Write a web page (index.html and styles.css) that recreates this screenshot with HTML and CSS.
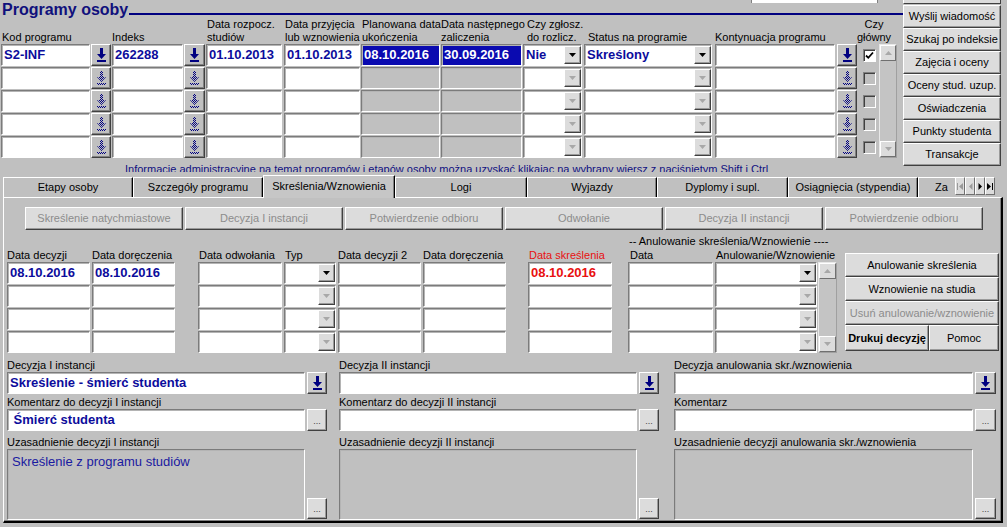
FILE: index.html
```html
<!DOCTYPE html>
<html>
<head>
<meta charset="utf-8">
<link rel="stylesheet" href="styles.css">
</head>
<body>
<svg class="defs" width="0" height="0"><defs><pattern id="dith" width="2" height="2" patternUnits="userSpaceOnUse"><rect width="1" height="1" fill="#000080"/><rect x="1" y="1" width="1" height="1" fill="#000080"/></pattern></defs></svg>
<div class="top">
  <div class="topl">
    <div class="hdr">
      <div class="title">Programy osoby</div>
      <div class="hline"><div class="topfield"></div><div class="bar"></div></div>
    </div>
    <div class="gwrap">
      <div class="gcols">
        <div class="lbls">
          <div class="c1 pl1">Kod programu</div>
          <div class="c2"></div>
          <div class="c3">Indeks</div>
          <div class="c4"></div>
          <div class="c5 pl1">Data rozpocz.<br>studiów</div>
          <div class="c6 pl1">Data przyjęcia<br>lub wznowienia</div>
          <div class="c7 pl1">Planowana data<br>ukończenia</div>
          <div class="c8">Data następnego<br>zaliczenia</div>
          <div class="c9 pl4">Czy zgłosz.<br>do rozlicz.</div>
          <div class="c10 pl4">Status na programie</div>
          <div class="c11">Kontynuacja programu</div>
          <div class="c12"></div>
          <div class="c13 cg">Czy<br>główny</div>
        </div>
        <div class="row">
          <div class="c1 f"><div class="v">S2-INF</div></div>
          <div class="c2 b"><svg width="9" height="14" viewBox="0 0 9 14"><path d="M3 0h3v6h3L4.5 11 0 6h3zM0 12h9v2H0z" fill="#000080"/></svg></div>
          <div class="c3 f"><div class="v">262288</div></div>
          <div class="c4 b"><svg width="9" height="14" viewBox="0 0 9 14"><path d="M3 0h3v6h3L4.5 11 0 6h3zM0 12h9v2H0z" fill="#000080"/></svg></div>
          <div class="c5 f"><div class="v">01.10.2013</div></div>
          <div class="c6 f"><div class="v">01.10.2013</div></div>
          <div class="c7 f sel"><div class="v">08.10.2016</div></div>
          <div class="c8 f sel"><div class="v">30.09.2016</div></div>
          <div class="c9 f dd"><div class="v">Nie</div><div class="ddb"><svg width="7" height="4"><path d="M0 0h7L3.5 4z" fill="#000"/></svg></div></div>
          <div class="c10 f dd"><div class="v">Skreślony</div><div class="ddb"><svg width="7" height="4"><path d="M0 0h7L3.5 4z" fill="#000"/></svg></div></div>
          <div class="c11 f"></div>
          <div class="c12 b"><svg width="9" height="14" viewBox="0 0 9 14"><path d="M3 0h3v6h3L4.5 11 0 6h3zM0 12h9v2H0z" fill="#000080"/></svg></div>
          <div class="c13"><div class="chk"><svg width="9" height="9" viewBox="0 0 9 9"><path d="M1 4.5l2.3 2.3L8 1.5" stroke="#000" stroke-width="1.8" fill="none"/></svg></div></div>
        </div>
        <div class="row">
          <div class="c1 f"></div>
          <div class="c2 b"><svg width="9" height="14" viewBox="0 0 9 14"><path d="M3 0h3v6h3L4.5 11 0 6h3zM0 12h9v2H0z" fill="url(#dith)"/></svg></div>
          <div class="c3 f"></div>
          <div class="c4 b"><svg width="9" height="14" viewBox="0 0 9 14"><path d="M3 0h3v6h3L4.5 11 0 6h3zM0 12h9v2H0z" fill="url(#dith)"/></svg></div>
          <div class="c5 f"></div>
          <div class="c6 f"></div>
          <div class="c7 f g"></div>
          <div class="c8 f g"></div>
          <div class="c9 f dd"><div class="v"></div><div class="ddb"><svg width="7" height="4"><path d="M0 0h7L3.5 4z" fill="#a8a8a8"/></svg></div></div>
          <div class="c10 f dd"><div class="v"></div><div class="ddb"><svg width="7" height="4"><path d="M0 0h7L3.5 4z" fill="#a8a8a8"/></svg></div></div>
          <div class="c11 f"></div>
          <div class="c12 b"><svg width="9" height="14" viewBox="0 0 9 14"><path d="M3 0h3v6h3L4.5 11 0 6h3zM0 12h9v2H0z" fill="url(#dith)"/></svg></div>
          <div class="c13"><div class="chk dis"></div></div>
        </div>
        <div class="row">
          <div class="c1 f"></div>
          <div class="c2 b"><svg width="9" height="14" viewBox="0 0 9 14"><path d="M3 0h3v6h3L4.5 11 0 6h3zM0 12h9v2H0z" fill="url(#dith)"/></svg></div>
          <div class="c3 f"></div>
          <div class="c4 b"><svg width="9" height="14" viewBox="0 0 9 14"><path d="M3 0h3v6h3L4.5 11 0 6h3zM0 12h9v2H0z" fill="url(#dith)"/></svg></div>
          <div class="c5 f"></div>
          <div class="c6 f"></div>
          <div class="c7 f g"></div>
          <div class="c8 f g"></div>
          <div class="c9 f dd"><div class="v"></div><div class="ddb"><svg width="7" height="4"><path d="M0 0h7L3.5 4z" fill="#a8a8a8"/></svg></div></div>
          <div class="c10 f dd"><div class="v"></div><div class="ddb"><svg width="7" height="4"><path d="M0 0h7L3.5 4z" fill="#a8a8a8"/></svg></div></div>
          <div class="c11 f"></div>
          <div class="c12 b"><svg width="9" height="14" viewBox="0 0 9 14"><path d="M3 0h3v6h3L4.5 11 0 6h3zM0 12h9v2H0z" fill="url(#dith)"/></svg></div>
          <div class="c13"><div class="chk dis"></div></div>
        </div>
        <div class="row">
          <div class="c1 f"></div>
          <div class="c2 b"><svg width="9" height="14" viewBox="0 0 9 14"><path d="M3 0h3v6h3L4.5 11 0 6h3zM0 12h9v2H0z" fill="url(#dith)"/></svg></div>
          <div class="c3 f"></div>
          <div class="c4 b"><svg width="9" height="14" viewBox="0 0 9 14"><path d="M3 0h3v6h3L4.5 11 0 6h3zM0 12h9v2H0z" fill="url(#dith)"/></svg></div>
          <div class="c5 f"></div>
          <div class="c6 f"></div>
          <div class="c7 f g"></div>
          <div class="c8 f g"></div>
          <div class="c9 f dd"><div class="v"></div><div class="ddb"><svg width="7" height="4"><path d="M0 0h7L3.5 4z" fill="#a8a8a8"/></svg></div></div>
          <div class="c10 f dd"><div class="v"></div><div class="ddb"><svg width="7" height="4"><path d="M0 0h7L3.5 4z" fill="#a8a8a8"/></svg></div></div>
          <div class="c11 f"></div>
          <div class="c12 b"><svg width="9" height="14" viewBox="0 0 9 14"><path d="M3 0h3v6h3L4.5 11 0 6h3zM0 12h9v2H0z" fill="url(#dith)"/></svg></div>
          <div class="c13"><div class="chk dis"></div></div>
        </div>
        <div class="row">
          <div class="c1 f"></div>
          <div class="c2 b"><svg width="9" height="14" viewBox="0 0 9 14"><path d="M3 0h3v6h3L4.5 11 0 6h3zM0 12h9v2H0z" fill="url(#dith)"/></svg></div>
          <div class="c3 f"></div>
          <div class="c4 b"><svg width="9" height="14" viewBox="0 0 9 14"><path d="M3 0h3v6h3L4.5 11 0 6h3zM0 12h9v2H0z" fill="url(#dith)"/></svg></div>
          <div class="c5 f"></div>
          <div class="c6 f"></div>
          <div class="c7 f g"></div>
          <div class="c8 f g"></div>
          <div class="c9 f dd"><div class="v"></div><div class="ddb"><svg width="7" height="4"><path d="M0 0h7L3.5 4z" fill="#a8a8a8"/></svg></div></div>
          <div class="c10 f dd"><div class="v"></div><div class="ddb"><svg width="7" height="4"><path d="M0 0h7L3.5 4z" fill="#a8a8a8"/></svg></div></div>
          <div class="c11 f"></div>
          <div class="c12 b"><svg width="9" height="14" viewBox="0 0 9 14"><path d="M3 0h3v6h3L4.5 11 0 6h3zM0 12h9v2H0z" fill="url(#dith)"/></svg></div>
          <div class="c13"><div class="chk dis"></div></div>
        </div>
      </div>
      <div class="vs top-vs">
        <div class="sa"><svg width="7" height="4"><path d="M0 4h7L3.5 0z" fill="#a8a8a8"/></svg></div>
        <div class="sa"><svg width="7" height="4"><path d="M0 0h7L3.5 4z" fill="#a8a8a8"/></svg></div>
      </div>
    </div>
    <div class="info">Informacje administracyjne na temat programów i etapów osoby można uzyskać klikając na wybrany wiersz z naciśniętym Shift i Ctrl</div>
  </div>
  <div class="rcol">
    <div class="rpart"></div>
    <div class="lb rb">Wyślij wiadomość</div>
    <div class="lb rb">Szukaj po indeksie</div>
    <div class="lb rb">Zajęcia i oceny</div>
    <div class="lb rb">Oceny stud. uzup.</div>
    <div class="lb rb">Oświadczenia</div>
    <div class="lb rb">Punkty studenta</div>
    <div class="lb rb">Transakcje</div>
  </div>
</div>

<div class="tabctl">
  <div class="tabs">
    <div class="tab w130">Etapy osoby</div>
    <div class="tab w130">Szczegóły programu</div>
    <div class="tab w132 act">Skreślenia/Wznowienia</div>
    <div class="tab w132">Logi</div>
    <div class="tab w130">Wyjazdy</div>
    <div class="tab w131">Dyplomy i supl.</div>
    <div class="tab w130">Osiągnięcia (stypendia)</div>
    <div class="tab wza">Za</div>
    <div class="tnav">
      <div class="tn"><svg width="6" height="7"><path d="M0 0h1v7H0zM6 0v7L2 3.5z" fill="#9a9a9a"/></svg></div>
      <div class="tn"><svg width="5" height="7"><path d="M4.5 0v7L1 3.5z" fill="#9a9a9a"/></svg></div>
      <div class="tn"><svg width="5" height="7"><path d="M0.5 0v7L4 3.5z" fill="#000"/></svg></div>
      <div class="tn"><svg width="6" height="7"><path d="M0 0v7l4-3.5zM5 0h1v7H5z" fill="#000"/></svg></div>
    </div>
  </div>
  <div class="panel">
    <div class="subbtns">
      <div class="lb sb">Skreślenie natychmiastowe</div>
      <div class="lb sb">Decyzja I instancji</div>
      <div class="lb sb">Potwierdzenie odbioru</div>
      <div class="lb sb">Odwołanie</div>
      <div class="lb sb">Decyzja II instancji</div>
      <div class="lb sb">Potwierdzenie odbioru</div>
    </div>

    <div class="sec2">
      <div class="s2l">
        <div class="s2hdr">-- Anulowanie skreślenia/Wznowienie ----</div>
        <div class="s2lb">
          <div class="d1">Data decyzji</div>
          <div class="d2">Data doręczenia</div>
          <div class="d3 pl1">Data odwołania</div>
          <div class="d4 pl1">Typ</div>
          <div class="d5">Data decyzji 2</div>
          <div class="d6">Data doręczenia</div>
          <div class="d7 pl1 red">Data skreślenia</div>
          <div class="d8 pl2">Data</div>
          <div class="d9 pl1">Anulowanie/Wznowienie</div>
        </div>
        <div class="s2row">
          <div class="d1 f"><div class="v">08.10.2016</div></div>
          <div class="d2 f"><div class="v">08.10.2016</div></div>
          <div class="d3 f"></div>
          <div class="d4 f dd"><div class="v"></div><div class="ddb"><svg width="7" height="4"><path d="M0 0h7L3.5 4z" fill="#000"/></svg></div></div>
          <div class="d5 f"></div>
          <div class="d6 f"></div>
          <div class="d7 f"><div class="v redv">08.10.2016</div></div>
          <div class="d8 f"></div>
          <div class="d9 f dd"><div class="v"></div><div class="ddb"><svg width="7" height="4"><path d="M0 0h7L3.5 4z" fill="#000"/></svg></div></div>
        </div>
        <div class="s2row">
          <div class="d1 f"></div>
          <div class="d2 f"></div>
          <div class="d3 f"></div>
          <div class="d4 f dd"><div class="v"></div><div class="ddb"><svg width="7" height="4"><path d="M0 0h7L3.5 4z" fill="#a8a8a8"/></svg></div></div>
          <div class="d5 f"></div>
          <div class="d6 f"></div>
          <div class="d7 f"></div>
          <div class="d8 f"></div>
          <div class="d9 f dd"><div class="v"></div><div class="ddb"><svg width="7" height="4"><path d="M0 0h7L3.5 4z" fill="#a8a8a8"/></svg></div></div>
        </div>
        <div class="s2row">
          <div class="d1 f"></div>
          <div class="d2 f"></div>
          <div class="d3 f"></div>
          <div class="d4 f dd"><div class="v"></div><div class="ddb"><svg width="7" height="4"><path d="M0 0h7L3.5 4z" fill="#a8a8a8"/></svg></div></div>
          <div class="d5 f"></div>
          <div class="d6 f"></div>
          <div class="d7 f"></div>
          <div class="d8 f"></div>
          <div class="d9 f dd"><div class="v"></div><div class="ddb"><svg width="7" height="4"><path d="M0 0h7L3.5 4z" fill="#a8a8a8"/></svg></div></div>
        </div>
        <div class="s2row">
          <div class="d1 f"></div>
          <div class="d2 f"></div>
          <div class="d3 f"></div>
          <div class="d4 f dd"><div class="v"></div><div class="ddb"><svg width="7" height="4"><path d="M0 0h7L3.5 4z" fill="#a8a8a8"/></svg></div></div>
          <div class="d5 f"></div>
          <div class="d6 f"></div>
          <div class="d7 f"></div>
          <div class="d8 f"></div>
          <div class="d9 f dd"><div class="v"></div><div class="ddb"><svg width="7" height="4"><path d="M0 0h7L3.5 4z" fill="#a8a8a8"/></svg></div></div>
        </div>
      </div>
      <div class="vs s2vs">
        <div class="sa"><svg width="7" height="4"><path d="M0 4h7L3.5 0z" fill="#a8a8a8"/></svg></div>
        <div class="sa"><svg width="7" height="4"><path d="M0 0h7L3.5 4z" fill="#a8a8a8"/></svg></div>
      </div>
      <div class="s2btns">
        <div class="lb ab">Anulowanie skreślenia</div>
        <div class="lb ab">Wznowienie na studia</div>
        <div class="lb ab dis">Usuń anulowanie/wznowienie</div>
        <div class="abrow">
          <div class="lb ab drukuj">Drukuj decyzję</div>
          <div class="lb ab pomoc">Pomoc</div>
        </div>
      </div>
    </div>

    <div class="sec3">
      <div class="col">
        <div class="l3">Decyzja I instancji</div>
        <div class="r3">
          <div class="f"><div class="v">Skreślenie - śmierć studenta</div></div>
          <div class="b lov3"><svg width="9" height="14" viewBox="0 0 9 14"><path d="M3 0h3v6h3L4.5 11 0 6h3zM0 12h9v2H0z" fill="#000080"/></svg></div>
        </div>
        <div class="l3 m1">Komentarz do decyzji I instancji</div>
        <div class="r3">
          <div class="f"><div class="v">&nbsp;Śmierć studenta</div></div>
          <div class="lb dots">...</div>
        </div>
        <div class="l3 m4">Uzasadnienie decyzji I instancji</div>
        <div class="r3 ta">
          <div class="f g"><div class="tav">Skreślenie z programu studiów</div></div>
          <div class="lb dots">...</div>
        </div>
      </div>
      <div class="col col2">
        <div class="l3">Decyzja II instancji</div>
        <div class="r3">
          <div class="f"></div>
          <div class="b lov3"><svg width="9" height="14" viewBox="0 0 9 14"><path d="M3 0h3v6h3L4.5 11 0 6h3zM0 12h9v2H0z" fill="#000080"/></svg></div>
        </div>
        <div class="l3 m1">Komentarz do decyzji II instancji</div>
        <div class="r3">
          <div class="f"></div>
          <div class="lb dots">...</div>
        </div>
        <div class="l3 m4">Uzasadnienie decyzji II instancji</div>
        <div class="r3 ta">
          <div class="f g"></div>
          <div class="lb dots">...</div>
        </div>
      </div>
      <div class="col col3">
        <div class="l3">Decyzja anulowania skr./wznowienia</div>
        <div class="r3">
          <div class="f"></div>
          <div class="b lov3"><svg width="9" height="14" viewBox="0 0 9 14"><path d="M3 0h3v6h3L4.5 11 0 6h3zM0 12h9v2H0z" fill="#000080"/></svg></div>
        </div>
        <div class="l3 m1">Komentarz</div>
        <div class="r3">
          <div class="f"></div>
          <div class="lb dots">...</div>
        </div>
        <div class="l3 m4">Uzasadnienie decyzji anulowania skr./wznowienia</div>
        <div class="r3 ta">
          <div class="f g"></div>
          <div class="lb dots">...</div>
        </div>
      </div>
    </div>
  </div>
</div>
</body>
</html>
```

FILE: styles.css
```css
* { box-sizing: border-box; }
html, body { margin: 0; padding: 0; }
body {
  width: 1007px; height: 527px; overflow: hidden;
  background: #c0c0c0;
  font-family: "Liberation Sans", Arial, sans-serif;
  font-size: 11px; color: #000;
}
.defs { display: block; width: 0; height: 0; }

/* generic widgets */
.f {
  height: 22px; background: #fff; overflow: hidden;
  border: 1px solid; border-color: #7b7b7b #fff #fff #7b7b7b;
  box-shadow: inset 1px 1px 0 #b4b4b4;
}
.f.g { background: #c0c0c0; }
.f.sel { background: #0a0ab0; }
.f.sel .v { color: #fff; }
.v {
  font-weight: bold; font-size: 13px; line-height: 19px;
  color: #0c0c9c; padding-left: 2px; white-space: nowrap;
}
.redv { color: #e81010; }
.dd { display: flex; }
.dd .v { flex: 1; }
.ddb {
  width: 17px; height: 18px; margin: 1px 0;
  background: #dcdcdc;
  border: 1px solid; border-color: #fff #404040 #404040 #fff;
  box-shadow: inset -1px -1px 0 #9a9a9a;
  display: flex; align-items: center; justify-content: center;
}
.b {
  height: 22px; background: #c0c0c0;
  border: 1px solid; border-color: #fff #404040 #404040 #fff;
  box-shadow: inset -1px -1px 0 #808080;
  display: flex; align-items: center; justify-content: center;
}
.lb {
  background: #dcdcdc;
  border: 1px solid; border-color: #fff #404040 #404040 #fff;
  box-shadow: inset -1px -1px 0 #9a9a9a;
  text-align: center; white-space: nowrap; overflow: hidden;
}
.pl1 { padding-left: 1px; }
.pl2 { padding-left: 2px; }
.pl4 { padding-left: 4px; }
.red { color: #e81010; }

/* top area */
.top { display: flex; height: 175px; }
.topl { width: 903px; }
.hdr { display: flex; height: 18px; }
.title {
  font-weight: bold; font-size: 16px; line-height: 18px;
  color: #10107c; padding-left: 2px; padding-top: 1px; white-space: nowrap;
}
.hline { flex: 1; margin-left: 1px; }
.topfield {
  margin-left: 622px; width: 127px; height: 3px; background: #fff;
  border-left: 1px solid #808080; border-right: 1px solid #808080;
}
.bar { margin-top: 10px; height: 2px; background: #000080; }

.gwrap { display: flex; }
.gcols { width: 876px; }
.lbls { display: flex; height: 26px; align-items: flex-end; }
.lbls > div { line-height: 13px; white-space: nowrap; }
.row { display: flex; height: 22px; margin-bottom: 1px; }

.c1 { margin-left: 1px; width: 89px; margin-right: 1px; }
.c2 { width: 20px; margin-right: 1px; }
.c3 { width: 71px; margin-right: 1px; }
.c4 { width: 21px; margin-right: 1px; }
.c5 { width: 76px; margin-right: 2px; }
.c6 { width: 76px; margin-right: 1px; }
.c7 { width: 79px; margin-right: 1px; }
.c8 { width: 81px; margin-right: 1px; }
.c9 { width: 59px; margin-right: 2px; }
.c10 { width: 128px; margin-right: 3px; }
.c11 { width: 120px; margin-right: 2px; }
.c12 { width: 20px; margin-right: 6px; }
.c13 { width: 13px; }
.lbls .cg { display: flex; justify-content: center; text-align: center; padding-left: 9px; }

.chk {
  width: 13px; height: 13px; margin-top: 5px; background: #fff;
  border: 1px solid; border-color: #808080 #fff #fff #808080;
  box-shadow: inset 1px 1px 0 #404040;
  display: flex; align-items: center; justify-content: center;
}
.chk.dis { background: #c0c0c0; }

.vs {
  background: #c4c4c4;
  border: 1px solid; border-color: #e8e8e8 #a0a0a0 #a0a0a0 #e8e8e8;
  display: flex; flex-direction: column; justify-content: space-between;
}
.top-vs { margin-left: 3px; margin-top: 26px; width: 18px; height: 114px; }
.sa {
  height: 16px; background: #dcdcdc;
  border: 1px solid; border-color: #fff #707070 #707070 #fff;
  display: flex; align-items: center; justify-content: center;
}

.info {
  height: 13px; margin-bottom: 3px; overflow: hidden; padding-left: 125px; padding-top: 4px;
  line-height: 13px; color: #101080; white-space: nowrap;
}

.rcol { width: 98px; }
.rpart {
  height: 4px; margin-bottom: 1px; background: #dcdcdc;
  border: 1px solid; border-top: 0; border-color: #fff #404040 #404040 #fff;
}
.rb { height: 23px; line-height: 21px; }

/* tabs */
.tabctl { margin-left: 3px; width: 1000px; }
.tabs { display: flex; align-items: flex-end; height: 22px; }
.tab {
  height: 20px; line-height: 18px; text-align: center; white-space: nowrap; overflow: hidden;
  border-top: 1px solid #fff; border-left: 1px solid #fff; border-right: 1px solid #000;
  box-shadow: inset -1px 0 0 #808080;
  background: #c0c0c0;
}
.tab.act { height: 23px; line-height: 21px; margin-bottom: -1px; position: relative; z-index: 1; background: #c6c6c6; }
.w130 { width: 130px; }
.w131 { width: 131px; }
.w132 { width: 132px; }
.wza { width: 37px; text-align: left; padding-left: 16px; border-right: 0; box-shadow: none; }
.tnav { display: flex; height: 18px; margin-bottom: 2px; }
.tn {
  width: 10px; height: 18px; background: #dcdcdc;
  border: 1px solid; border-color: #fff #707070 #707070 #fff;
  display: flex; align-items: center; justify-content: center;
}

.panel {
  height: 326px; background: #c0c0c0;
  border-top: 1px solid #fff; border-left: 1px solid #fff;
  border-right: 2px solid #000; border-bottom: 2px solid #000;
  box-shadow: inset -1px -1px 0 #808080;
}
.subbtns { display: flex; gap: 2px; margin: 9px 0 0 21px; }
.sb { width: 158px; height: 23px; line-height: 21px; color: #8c8c8c; }

.sec2 { display: flex; align-items: flex-start; height: 123px; }
.s2l { width: 814px; padding-left: 3px; }
.s2hdr { height: 18px; padding-left: 622px; padding-top: 5px; line-height: 13px; white-space: nowrap; }
.s2lb { display: flex; height: 14px; line-height: 14px; white-space: nowrap; }
.s2row { display: flex; height: 22px; margin-bottom: 1px; }
.d1 { width: 83px; }
.d2 { margin-left: 2px; width: 83px; }
.d3 { margin-left: 23px; width: 84px; }
.d4 { margin-left: 2px; width: 52px; }
.d5 { margin-left: 2px; width: 83px; }
.d6 { margin-left: 2px; width: 83px; }
.d7 { margin-left: 22px; width: 84px; }
.d8 { margin-left: 16px; width: 85px; }
.d9 { margin-left: 2px; width: 102px; }
.s2vs { margin-top: 32px; width: 19px; height: 91px; }
.s2btns { margin-left: 8px; margin-top: 23px; width: 154px; }
.ab { height: 24px; line-height: 22px; }
.ab.dis { color: #8c8c8c; }
.abrow { display: flex; }
.ab.drukuj { width: 84px; height: 26px; line-height: 24px; font-weight: bold; font-size: 11px; }
.ab.pomoc { width: 70px; height: 26px; line-height: 24px; }

.sec3 { display: flex; margin-top: 5px; padding-left: 3px; }
.col { width: 320px; }
.col2 { margin-left: 12px; }
.col3 { margin-left: 15px; width: 322px; }
.l3 { height: 14px; line-height: 14px; white-space: nowrap; }
.l3.m1 { margin-top: 1px; }
.l3.m4 { margin-top: 4px; }
.r3 { display: flex; height: 22px; }
.r3 .f { width: 298px; }
.col3 .r3 .f { width: 299px; }
.r3 .b, .r3 .dots { margin-left: 2px; width: 20px; height: 22px; }
.col3 .r3 .b, .col3 .r3 .dots { width: 21px; }
.lov3 { background: #cccccc; }
.dots {
  display: flex; align-items: flex-end; justify-content: center;
  font-size: 9px; line-height: 9px; padding-bottom: 4px; color: #404040;
}
.r3.ta { height: 71px; align-items: flex-end; }
.r3.ta .f { height: 71px; }
.r3.ta .dots { height: 21px; margin-bottom: 1px; }
.tav { font-size: 13px; line-height: 15px; color: #1a1aa0; padding: 4px 0 0 4px; white-space: nowrap; }
```
